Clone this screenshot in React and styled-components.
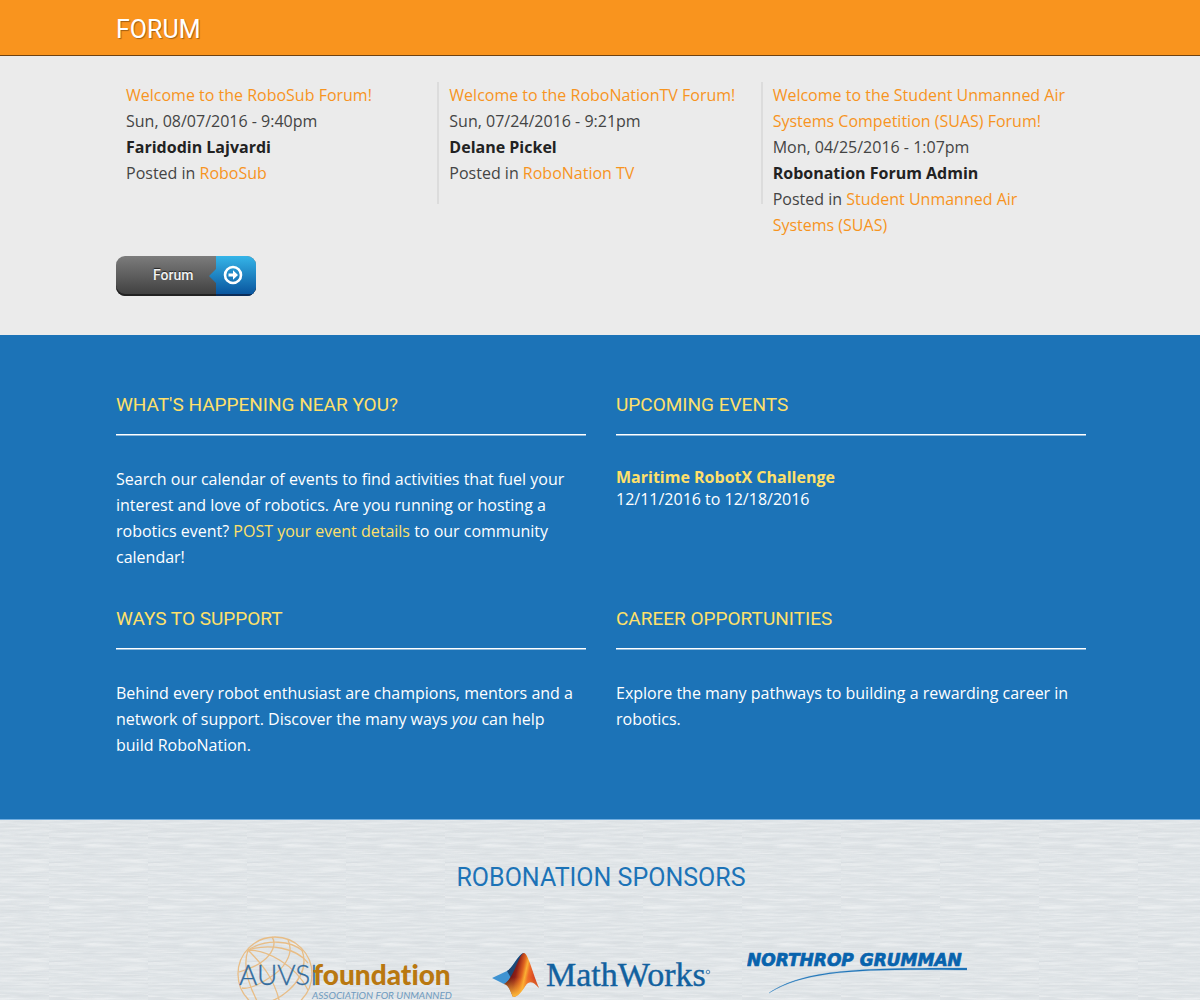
import React from "react";
import styled, { createGlobalStyle } from "styled-components";

const display = `Roboto, "Liberation Sans", sans-serif`;

const grain = `<svg xmlns="http://www.w3.org/2000/svg" width="99" height="99"><filter id="g" x="0" y="0" width="1" height="1"><feTurbulence type="fractalNoise" baseFrequency="0.02 0.5" numOctaves="3" seed="8"/><feColorMatrix values="0 0 0 0 .5  0 0 0 0 .53  0 0 0 0 .56  .45 0 0 0 -.18"/></filter><filter id="h" x="0" y="0" width="1" height="1"><feTurbulence type="fractalNoise" baseFrequency="0.03 0.4" numOctaves="3" seed="21"/><feColorMatrix values="0 0 0 0 1  0 0 0 0 1  0 0 0 0 1  .9 0 0 0 -.36"/></filter><rect width="99" height="99" filter="url(#g)"/><rect width="99" height="99" filter="url(#h)"/></svg>`;
const grainUrl = `url("data:image/svg+xml,${encodeURIComponent(grain)}")`;

const GlobalStyle = createGlobalStyle`
  *, *::before, *::after { box-sizing: border-box; }
  body {
    margin: 0;
    background: #ebebeb;
    color: #444;
    font: 400 16px/26px "Open Sans", "Noto Sans", sans-serif;
  }
  h2, h3, p { margin: 0; }
  a { color: #f7941e; text-decoration: none; }
`;

const Container = styled.div`
  width: 100%;
  max-width: 1002px;
  margin: 0 auto;
  padding: 0 15px 0 17px;
`;

const TitleBar = styled.header`
  padding: 14px 0 9px;
  background: #f9941e;
  border-bottom: 1px solid #6e4212;
`;

const BarTitle = styled.h2`
  color: #fff;
  font: 400 25px/32px ${display};
  text-shadow: 1px 1px 1px rgba(0, 0, 0, 0.35);
`;

const ForumSection = styled.section`
  padding: 26px 0 39px;
  background: #ebebeb;
`;

const Posts = styled.div`
  display: grid;
  grid-template-columns: repeat(3, 1fr);
  align-items: start;
  @media (max-width: 700px) {
    grid-template-columns: 1fr;
  }
`;

const Post = styled.article`
  padding: 0 10px 18px;
  border-right: 2px solid #dcdcdc;
  &:last-child { border-right-color: transparent; }
  strong { color: #222; font-weight: 700; }
`;

const ForumLink = styled.a`
  display: inline-flex;
  width: 140px;
  height: 40px;
  vertical-align: top;
  overflow: hidden;
  border-radius: 9px;
  background: linear-gradient(#7c7c7c, #3e3e3e);
  box-shadow: inset 0 -2px 0 #222;
  color: #f2f2f2;
  font: 500 14px/39px ${display};
  text-shadow: 0 -1px 1px #222;
`;

const ForumLabel = styled.span`
  flex: 1;
  padding-left: 37px;
`;

const CommunitySection = styled.section`
  padding: 55px 0 61px;
  background: #1c73b7;
  border-bottom: 1px solid #71aee0;
  color: #fff;
  a { color: #ffe06a; }
`;

const Topics = styled.div`
  display: grid;
  grid-template-columns: 1fr 1fr;
  gap: 34px 30px;
  @media (max-width: 700px) {
    grid-template-columns: 1fr;
  }
`;

const TopicTitle = styled.h3`
  margin-bottom: 31px;
  padding-bottom: 14px;
  border-bottom: 1px solid #fff;
  box-shadow: 0 1px 0 #8db8da;
  color: #ffe06a;
  font: 400 19px/30px ${display};
`;

const Event = styled.p`
  line-height: 22px;
  a { display: block; font-weight: 700; }
`;

const SponsorSection = styled.section`
  padding: 42px 0 0;
  background: #dfe4e7 ${grainUrl} 49px 34px;
`;

const SponsorTitle = styled.h2`
  margin-bottom: 42px;
  color: #1c73b7;
  font: 400 25px/32px ${display};
  text-align: center;
`;

const Logos = styled.div`
  display: flex;
  flex-wrap: wrap;
  justify-content: center;
  gap: 36px;
`;

const LogoLink = styled.a`
  display: block;
  svg { display: block; }
`;

const posts = [
  { title: "Welcome to the RoboSub Forum!", date: "Sun, 08/07/2016 - 9:40pm", author: "Faridodin Lajvardi", board: "RoboSub" },
  { title: "Welcome to the RoboNationTV Forum!", date: "Sun, 07/24/2016 - 9:21pm", author: "Delane Pickel", board: "RoboNation TV" },
  { title: "Welcome to the Student Unmanned Air Systems Competition (SUAS) Forum!", date: "Mon, 04/25/2016 - 1:07pm", author: "Robonation Forum Admin", board: "Student Unmanned Air Systems (SUAS)" },
];

function ArrowTab() {
  return (
    <svg width="47" height="40" viewBox="0 0 47 40" aria-hidden="true">
      <defs>
        <linearGradient id="tab" x1="0" y1="0" x2="0" y2="1">
          <stop offset="0" stopColor="#35b5e8" />
          <stop offset="1" stopColor="#07519b" />
        </linearGradient>
      </defs>
      <path d="M7 0H47V40H7V27L0 20L7 13Z" fill="url(#tab)" />
      <path d="M7 38H47V40H7Z" fill="#0b2c58" />
      <circle cx="24" cy="19" r="8" fill="none" stroke="#fff" strokeWidth="2.6" />
      <path d="M19.5 17.4H24V14.3L29 19L24 23.7V20.6H19.5Z" fill="#fff" />
    </svg>
  );
}

function AuvsiLogo() {
  return (
    <svg width="220" height="64" viewBox="0 0 220 64" role="img" aria-label="AUVSI Foundation">
      <g fill="none" stroke="#e8bd86" strokeWidth="1.3">
        <circle cx="40" cy="38" r="37" />
        <path d="M13 14C32 2 56 5 68 15M13 14C31 14 60 28 73 54M13 14C25 26 42 44 46 74M13 14C8 28 12 48 26 72" />
        <path d="M13 14C34 7 62 12 73 27" />
        <path d="M37 1C42 8 37 18 28 25C20 32 9 34 4 36" />
        <path d="M53 4C60 18 48 34 34 42C22 50 12 53 7 52" />
        <path d="M67 14C72 28 67 42 54 54C44 63 32 68 20 68" />
      </g>
      <text x="4" y="49" fill="#336c9e" stroke="#336c9e" strokeWidth=".3" fontFamily="Lato, sans-serif" fontWeight="300" fontSize="28">AUVSI</text>
      <text x="78" y="49" fill="#b97810" fontFamily="Lato, sans-serif" fontWeight="900" fontSize="28" style={{ fontVariantLigatures: "none" }}>foundation</text>
      <text x="77" y="63" fill="#6f9bc0" fontFamily="Lato, sans-serif" fontStyle="italic" fontSize="10">ASSOCIATION FOR UNMANNED</text>
    </svg>
  );
}

function MathWorksLogo() {
  return (
    <svg width="220" height="64" viewBox="0 0 220 64" role="img" aria-label="MathWorks">
      <defs>
        <linearGradient id="peak" x1=".1" y1=".35" x2="1" y2=".6">
          <stop offset="0" stopColor="#4a0f12" />
          <stop offset=".28" stopColor="#8e1f18" />
          <stop offset=".46" stopColor="#e0641f" />
          <stop offset=".56" stopColor="#fbb034" />
          <stop offset=".66" stopColor="#ee6a28" />
          <stop offset="1" stopColor="#c2281f" />
        </linearGradient>
        <linearGradient id="base" x1="0" y1="0" x2="0" y2="1">
          <stop offset=".55" stopColor="#f9a12c" stopOpacity="0" />
          <stop offset="1" stopColor="#ffbf3a" />
        </linearGradient>
      </defs>
      <path d="M1 42L16 35C22 32 26 20 32 17L25 38C22 43 18 47 13 48Z" fill="#3f93d2" />
      <path d="M16 35C23 31 27 18 33 17L27 36L20 42Z" fill="#1c4775" />
      <path d="M13 48C23 43 28 17 33 17C37 17 42 38 48 52C42 45 38 45 35 49C31 55 27 61 22 61C19 55 18 49 13 48Z" fill="url(#peak)" />
      <path d="M13 48C23 43 28 17 33 17C37 17 42 38 48 52C42 45 38 45 35 49C31 55 27 61 22 61C19 55 18 49 13 48Z" fill="url(#base)" />
      <text x="55" y="50" fill="#12619f" stroke="#12619f" strokeWidth=".4" fontFamily="'Liberation Serif', serif" fontSize="34">MathWorks</text>
      <circle cx="217" cy="36" r="1.8" fill="none" stroke="#4d84b4" strokeWidth="1" />
    </svg>
  );
}

function NorthropLogo() {
  return (
    <svg width="220" height="64" viewBox="0 0 220 64" role="img" aria-label="Northrop Grumman">
      <text x="0" y="30" fill="#0863ad" stroke="#0863ad" strokeWidth=".7" fontFamily="'DejaVu Sans', sans-serif" fontWeight="700" fontStyle="italic" fontSize="17">NORTHROP GRUMMAN</text>
      <path d="M22 57C58 33 112 32 220 32V34C112 33 60 34 22 57Z" fill="#1870b6" stroke="#3684c2" strokeWidth=".3" />
    </svg>
  );
}

export default function App() {
  return (
    <>
      <GlobalStyle />
      <TitleBar>
        <Container><BarTitle>FORUM</BarTitle></Container>
      </TitleBar>
      <ForumSection>
        <Container>
          <Posts>
            {posts.map((post) => (
              <Post key={post.board}>
                <a href="#topic">{post.title}</a>
                <p>{post.date}</p>
                <p><strong>{post.author}</strong></p>
                <p>Posted in <a href="#board">{post.board}</a></p>
              </Post>
            ))}
          </Posts>
          <ForumLink href="#forum"><ForumLabel>Forum</ForumLabel><ArrowTab /></ForumLink>
        </Container>
      </ForumSection>
      <CommunitySection>
        <Container>
          <Topics>
            <article>
              <TopicTitle>WHAT'S HAPPENING NEAR YOU?</TopicTitle>
              <p>Search our calendar of events to find activities that fuel your interest and love of robotics. Are you running or hosting a robotics event? <a href="#post">POST your event details</a> to our community calendar!</p>
            </article>
            <article>
              <TopicTitle>UPCOMING EVENTS</TopicTitle>
              <Event><a href="#event">Maritime RobotX Challenge</a>12/11/2016 to 12/18/2016</Event>
            </article>
            <article>
              <TopicTitle>WAYS TO SUPPORT</TopicTitle>
              <p>Behind every robot enthusiast are champions, mentors and a network of support. Discover the many ways <em>you</em> can help build RoboNation.</p>
            </article>
            <article>
              <TopicTitle>CAREER OPPORTUNITIES</TopicTitle>
              <p>Explore the many pathways to building a rewarding career in robotics.</p>
            </article>
          </Topics>
        </Container>
      </CommunitySection>
      <SponsorSection>
        <Container>
          <SponsorTitle>ROBONATION SPONSORS</SponsorTitle>
          <Logos>
            <LogoLink href="#auvsi"><AuvsiLogo /></LogoLink>
            <LogoLink href="#mathworks"><MathWorksLogo /></LogoLink>
            <LogoLink href="#northrop"><NorthropLogo /></LogoLink>
          </Logos>
        </Container>
      </SponsorSection>
    </>
  );
}
